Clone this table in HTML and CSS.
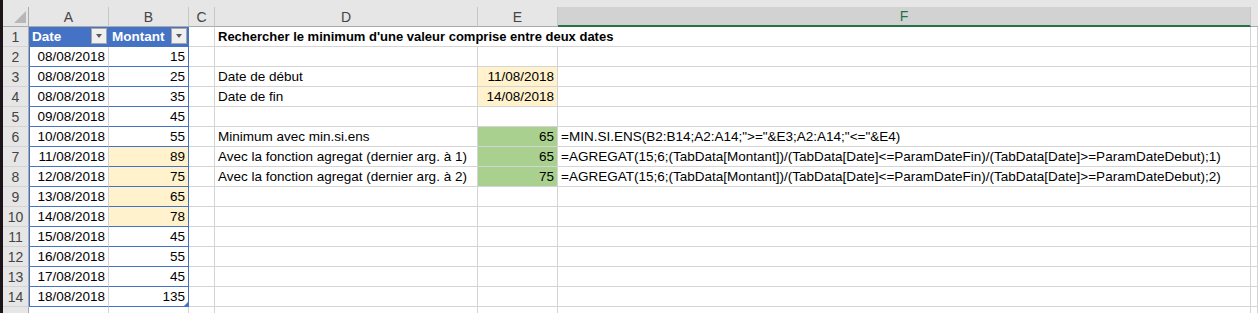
FILE: index.html
```html
<!DOCTYPE html>
<html lang="fr">
<head>
<meta charset="utf-8">
<title>Minimum entre deux dates</title>
<link rel="stylesheet" href="styles.css">
</head>
<body>
<div class="window">
  <div class="edge"></div>
  <div class="app">
    <div class="topband"></div>
    <div class="sheet">
      <div class="hd corner"><span class="tri"></span></div>
      <div class="hd col">A</div>
      <div class="hd col">B</div>
      <div class="hd col">C</div>
      <div class="hd col">D</div>
      <div class="hd col">E</div>
      <div class="hd col sel">F</div>
      <div class="hd col last"></div>

      <div class="rh">1</div>
      <div class="c th">Date<span class="flt"></span></div>
      <div class="c th thb">Montant<span class="flt"></span></div>
      <div class="c"></div>
      <div class="c title">Rechercher le minimum d'une valeur comprise entre deux dates</div>
      <div class="c"></div>

      <div class="rh">2</div>
      <div class="c ta num">08/08/2018</div>
      <div class="c tb num">15</div>
      <div class="c"></div><div class="c"></div><div class="c"></div><div class="c"></div><div class="c"></div>

      <div class="rh">3</div>
      <div class="c ta num">08/08/2018</div>
      <div class="c tb num">25</div>
      <div class="c"></div>
      <div class="c">Date de début</div>
      <div class="c num yel">11/08/2018</div>
      <div class="c"></div><div class="c"></div>

      <div class="rh">4</div>
      <div class="c ta num">08/08/2018</div>
      <div class="c tb num">35</div>
      <div class="c"></div>
      <div class="c">Date de fin</div>
      <div class="c num yel">14/08/2018</div>
      <div class="c"></div><div class="c"></div>

      <div class="rh">5</div>
      <div class="c ta num">09/08/2018</div>
      <div class="c tb num">45</div>
      <div class="c"></div><div class="c"></div><div class="c"></div><div class="c"></div><div class="c"></div>

      <div class="rh">6</div>
      <div class="c ta num">10/08/2018</div>
      <div class="c tb num">55</div>
      <div class="c"></div>
      <div class="c">Minimum avec min.si.ens</div>
      <div class="c num grn">65</div>
      <div class="c">=MIN.SI.ENS(B2:B14;A2:A14;"&gt;="&amp;E3;A2:A14;"&lt;="&amp;E4)</div>
      <div class="c"></div>

      <div class="rh">7</div>
      <div class="c ta num">11/08/2018</div>
      <div class="c tb num yel">89</div>
      <div class="c"></div>
      <div class="c">Avec la fonction agregat (dernier arg. à 1)</div>
      <div class="c num grn">65</div>
      <div class="c">=AGREGAT(15;6;(TabData[Montant])/(TabData[Date]&lt;=ParamDateFin)/(TabData[Date]&gt;=ParamDateDebut);1)</div>
      <div class="c"></div>

      <div class="rh">8</div>
      <div class="c ta num">12/08/2018</div>
      <div class="c tb num yel">75</div>
      <div class="c"></div>
      <div class="c">Avec la fonction agregat (dernier arg. à 2)</div>
      <div class="c num grn">75</div>
      <div class="c">=AGREGAT(15;6;(TabData[Montant])/(TabData[Date]&lt;=ParamDateFin)/(TabData[Date]&gt;=ParamDateDebut);2)</div>
      <div class="c"></div>

      <div class="rh">9</div>
      <div class="c ta num">13/08/2018</div>
      <div class="c tb num yel">65</div>
      <div class="c"></div><div class="c"></div><div class="c"></div><div class="c"></div><div class="c"></div>

      <div class="rh">10</div>
      <div class="c ta num">14/08/2018</div>
      <div class="c tb num yel">78</div>
      <div class="c"></div><div class="c"></div><div class="c"></div><div class="c"></div><div class="c"></div>

      <div class="rh">11</div>
      <div class="c ta num">15/08/2018</div>
      <div class="c tb num">45</div>
      <div class="c"></div><div class="c"></div><div class="c"></div><div class="c"></div><div class="c"></div>

      <div class="rh">12</div>
      <div class="c ta num">16/08/2018</div>
      <div class="c tb num">55</div>
      <div class="c"></div><div class="c"></div><div class="c"></div><div class="c"></div><div class="c"></div>

      <div class="rh">13</div>
      <div class="c ta num">17/08/2018</div>
      <div class="c tb num">45</div>
      <div class="c"></div><div class="c"></div><div class="c"></div><div class="c"></div><div class="c"></div>

      <div class="rh">14</div>
      <div class="c ta num">18/08/2018</div>
      <div class="c tb num end">135<span class="grip"></span></div>
      <div class="c"></div><div class="c"></div><div class="c"></div><div class="c"></div><div class="c"></div>

      <div class="rh"></div>
      <div class="c"></div><div class="c"></div>
      <div class="c"></div><div class="c"></div><div class="c"></div><div class="c"></div><div class="c"></div>
    </div>
  </div>
</div>
</body>
</html>
```

FILE: styles.css
```css
html, body {
  margin: 0;
  padding: 0;
  background: #ffffff;
  overflow: hidden;
}

.window {
  display: flex;
  width: 1258px;
  height: 313px;
  overflow: hidden;
}

.edge {
  width: 3px;
  flex: none;
  background: #1b1418;
}

.app {
  flex: 1;
  display: flex;
  flex-direction: column;
  min-width: 0;
}

.topband {
  height: 7px;
  flex: none;
  background: #e6e6e6;
}

.sheet {
  display: grid;
  grid-template-columns: 26px 80px 80px 26px 263px 80px 693px 1fr;
  grid-auto-rows: 20px;
  font-family: "Liberation Sans", Arial, sans-serif;
  font-size: 13.5px;
  color: #000;
}

.hd {
  box-sizing: border-box;
  background: #e6e6e6;
  border-right: 1px solid #c6c6c6;
  border-bottom: 1px solid #ababab;
  color: #444444;
  font-size: 14px;
  display: flex;
  align-items: center;
  justify-content: center;
}

.corner {
  position: relative;
  border-right: 1px solid #ababab;
}

.corner .tri {
  position: absolute;
  right: 2px;
  bottom: 3px;
  width: 0;
  height: 0;
  border-left: 12px solid transparent;
  border-bottom: 12px solid #b7b7b7;
}

.hd.sel {
  background: #d2d2d2;
  color: #217346;
  border-bottom: 2px solid #217346;
}

.hd.last {
  border-right: none;
}

.rh {
  box-sizing: border-box;
  background: #e6e6e6;
  border-right: 1px solid #ababab;
  border-bottom: 1px solid #d4d4d4;
  color: #444444;
  font-size: 14px;
  display: flex;
  align-items: center;
  justify-content: center;
}

.c {
  box-sizing: border-box;
  border-right: 1px solid #d4d4d4;
  border-bottom: 1px solid #d4d4d4;
  padding: 0 3px 2px 3px;
  display: flex;
  align-items: flex-end;
  white-space: nowrap;
  overflow: hidden;
  position: relative;
}

.num {
  justify-content: flex-end;
}

.th {
  background: #4472c4;
  color: #ffffff;
  font-weight: bold;
  border-right-color: #4472c4;
  border-bottom-color: #4472c4;
  box-shadow: inset 1px 0 0 #4472c4;
}

.thb {
  border-right-color: #4472c4;
}

.flt {
  position: absolute;
  right: 1px;
  top: 1px;
  box-sizing: border-box;
  width: 16px;
  height: 16px;
  background: #f0f0f0;
  border: 1px solid #a6a6a6;
}

.flt::after {
  content: "";
  position: absolute;
  left: 4px;
  top: 5px;
  border-left: 3.5px solid transparent;
  border-right: 3.5px solid transparent;
  border-top: 4px solid #5a5a5a;
}

.ta {
  border-bottom-color: #4472c4;
  box-shadow: inset 1px 0 0 #4472c4;
}

.tb {
  border-bottom-color: #4472c4;
  border-right-color: #4472c4;
}

.title {
  grid-column: span 3;
  font-weight: bold;
  font-size: 13px;
}

.yel {
  background: #fff2cc;
}

.grn {
  background: #a9d08e;
}

.grip {
  position: absolute;
  right: 0;
  bottom: 0;
  width: 0;
  height: 0;
  border-left: 4px solid transparent;
  border-bottom: 4px solid #4472c4;
}
```
